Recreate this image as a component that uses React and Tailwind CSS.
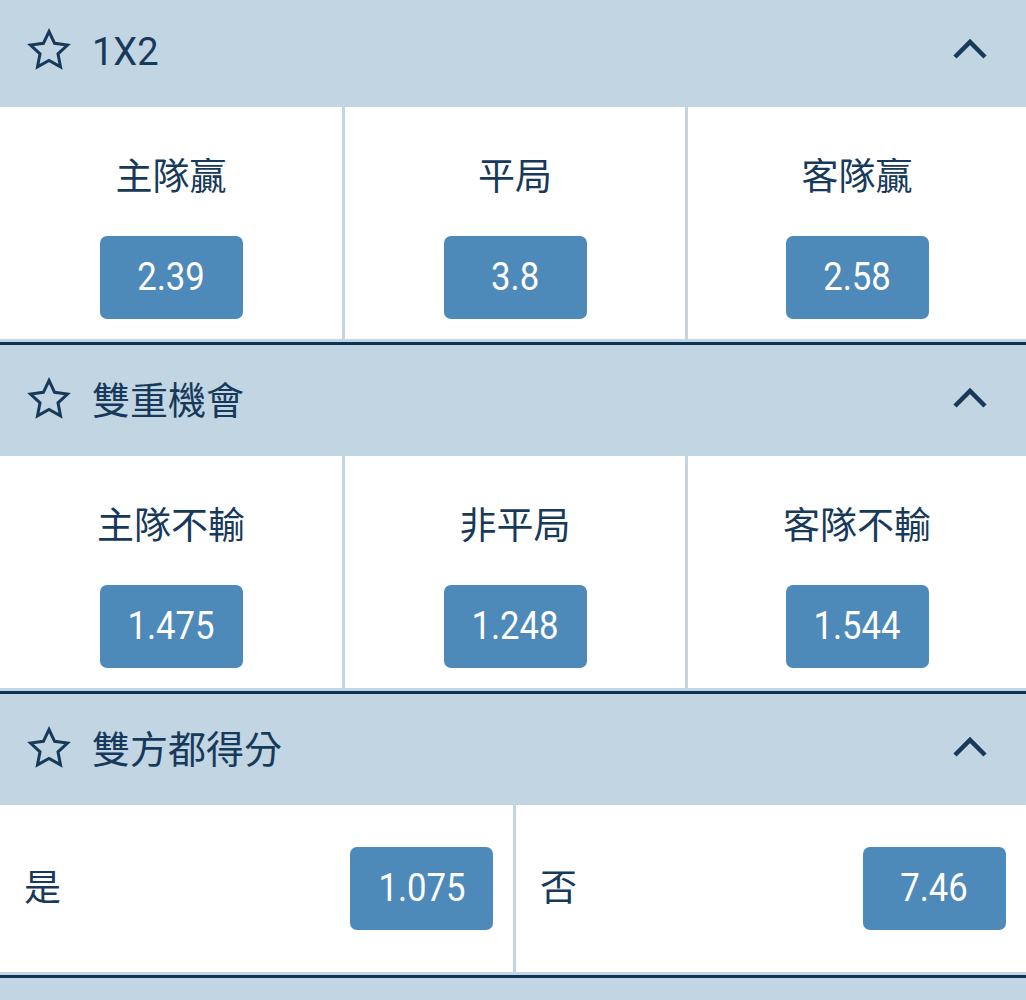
import React from 'react';

// --- Data ---
const markets = [
    {
        title: '1X2',
        cols: 3,
        picks: [
            { label: '主隊贏', odds: '2.39' },
            { label: '平局', odds: '3.8' },
            { label: '客隊贏', odds: '2.58' },
        ],
    },
    {
        title: '雙重機會',
        cols: 3,
        picks: [
            { label: '主隊不輸', odds: '1.475' },
            { label: '非平局', odds: '1.248' },
            { label: '客隊不輸', odds: '1.544' },
        ],
    },
    {
        title: '雙方都得分',
        cols: 2,
        picks: [
            { label: '是', odds: '1.075' },
            { label: '否', odds: '7.46' },
        ],
    },
];

// --- Icons ---
const StarIcon = () => (
    <svg viewBox="0 0 48 48" className="w-[48px] h-[48px]" fill="none">
        <polygon
            points="24,5.5 29.6,17.3 42.5,19 33,27.9 35.5,40.8 24,34.5 12.5,40.8 15,27.9 5.5,19 18.4,17.3"
            stroke="#17395a"
            strokeWidth="3"
            strokeLinejoin="miter"
        />
    </svg>
);

const ChevronUp = () => (
    <svg viewBox="0 0 40 24" className="w-[40px] h-[24px]" fill="none">
        <polyline points="5,20 20,5 35,20" stroke="#17395a" strokeWidth="4.5" strokeLinecap="butt" strokeLinejoin="miter" />
    </svg>
);

const OddsButton = ({ odds }) => (
    <div className="w-[143px] h-[83px] rounded-[7px] bg-[#4d8aba] flex items-center justify-center text-white">
        <span className="inline-block text-[39px] leading-none scale-x-[0.89]">{odds}</span>
    </div>
);

function MarketHeader({ title }) {
    return (
        <div className="h-[111px] bg-[#c2d5e3] flex items-center pl-[25px] pr-[36px]">
            <div className="mt-[-3px]">
                <StarIcon />
            </div>
            <span className="ml-[19px] text-[38px] leading-none text-[#17395a]">{title}</span>
            <div className="ml-auto mt-[-6px]">
                <ChevronUp />
            </div>
        </div>
    );
}

function Market({ market, first }) {
    return (
        <section className={first ? '' : 'border-t-[3px] border-[#0f3352]'}>
            <MarketHeader title={market.title} />
            {market.cols === 3 ? (
                <div className="grid grid-cols-[342px_340px_1fr] gap-[3px] pb-[3px] bg-[#c2d5e3]">
                    {market.picks.map((p) => (
                        <div key={p.label} className="bg-white h-[232px] flex flex-col items-center pt-[47px]">
                            <span className="text-[37px] leading-[48px] text-[#17395a]">{p.label}</span>
                            <div className="mt-[34px]">
                                <OddsButton odds={p.odds} />
                            </div>
                        </div>
                    ))}
                </div>
            ) : (
                <div className="grid grid-cols-[513px_1fr] gap-[3px] pb-[3px] bg-[#c2d5e3]">
                    {market.picks.map((p) => (
                        <div key={p.label} className="bg-white h-[167px] flex items-center justify-between pl-[24px] pr-[20px]">
                            <span className="text-[37px] leading-[48px] text-[#17395a]">{p.label}</span>
                            <OddsButton odds={p.odds} />
                        </div>
                    ))}
                </div>
            )}
        </section>
    );
}

export default function App() {
    return (
        <div className="w-[1026px] h-[1000px] overflow-hidden bg-white font-['Roboto','Noto_Sans_CJK_TC',sans-serif]">
            <div className="mt-[-4px]">
                {markets.map((m, i) => (
                    <Market key={m.title} market={m} first={i === 0} />
                ))}
                <div className="border-t-[3px] border-[#0f3352] h-[111px] bg-[#c2d5e3]" />
            </div>
        </div>
    );
}
